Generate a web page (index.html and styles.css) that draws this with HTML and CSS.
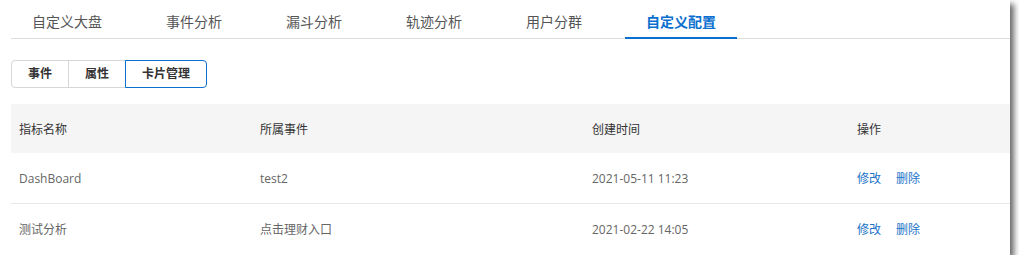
FILE: index.html
```html
<!DOCTYPE html>
<html>
<head>
  <meta charset="UTF-8">
  <title>自定义配置</title>
  <link rel="stylesheet" href="styles.css">
</head>
<body>
<div class="panel">
  <div class="nav">
    <div class="nav-item">自定义大盘</div>
    <div class="nav-item">事件分析</div>
    <div class="nav-item">漏斗分析</div>
    <div class="nav-item">轨迹分析</div>
    <div class="nav-item">用户分群</div>
    <div class="nav-item active">自定义配置</div>
  </div>
  <div class="switch">
    <div class="switch-btn">事件</div>
    <div class="switch-btn">属性</div>
    <div class="switch-btn active">卡片管理</div>
  </div>
  <table class="list">
    <colgroup>
      <col style="width: 241px">
      <col style="width: 332px">
      <col style="width: 265px">
      <col>
    </colgroup>
    <thead>
      <tr>
        <th>指标名称</th>
        <th>所属事件</th>
        <th>创建时间</th>
        <th>操作</th>
      </tr>
    </thead>
    <tbody>
      <tr>
        <td>DashBoard</td>
        <td>test2</td>
        <td>2021-05-11 11:23</td>
        <td><a class="op">修改</a><a class="op">删除</a></td>
      </tr>
      <tr>
        <td>测试分析</td>
        <td>点击理财入口</td>
        <td>2021-02-22 14:05</td>
        <td><a class="op">修改</a><a class="op">删除</a></td>
      </tr>
    </tbody>
  </table>
</div>
</body>
</html>
```

FILE: styles.css
```css
html, body {
  margin: 0;
  padding: 0;
  background: #fff;
}
body {
  font-family: "Segoe UI", "Open Sans", "Noto Sans CJK SC", sans-serif;
  color: #333;
}
.panel {
  width: 1010px;
  height: 255px;
  box-sizing: border-box;
  padding-left: 11px;
  background: #fff;
  box-shadow: 4px 4px 6px rgba(0, 0, 0, .6);
  overflow: hidden;
}
.nav {
  display: flex;
  height: 39px;
  box-sizing: border-box;
  border-bottom: 1px solid #dcdcdc;
}
.nav-item {
  height: 39px;
  box-sizing: border-box;
  padding: 8px 21px 0;
  margin-right: 22px;
  line-height: 28px;
  font-size: 14px;
  color: #555;
  border-bottom: 2px solid transparent;
}
.nav-item.active {
  color: #0a6fcf;
  font-weight: bold;
  border-bottom-color: #0a6fcf;
}
.switch {
  display: flex;
  margin-top: 21px;
}
.switch-btn {
  height: 28px;
  box-sizing: border-box;
  padding: 0 16px;
  line-height: 26px;
  font-size: 12px;
  font-weight: bold;
  color: #333;
  border: 1px solid #d6d6d6;
  margin-left: -1px;
}
.switch-btn:first-child {
  margin-left: 0;
  border-radius: 4px 0 0 4px;
}
.switch-btn:last-child {
  border-radius: 0 4px 4px 0;
}
.switch-btn.active {
  border-color: #0a6fcf;
  position: relative;
}
.list {
  width: 999px;
  margin-top: 16px;
  border-collapse: collapse;
  table-layout: fixed;
  font-size: 12px;
}
.list th {
  height: 49px;
  padding: 0 8px;
  text-align: left;
  font-weight: normal;
  color: #333;
  background: #f5f5f5;
}
.list td {
  height: 50px;
  padding: 0 8px;
  color: #666;
  border-bottom: 1px solid #e8e8e8;
}
.list tbody tr:last-child td {
  border-bottom: 0;
}
.op {
  color: #1a73c8;
  margin-right: 15px;
  cursor: pointer;
}
```
